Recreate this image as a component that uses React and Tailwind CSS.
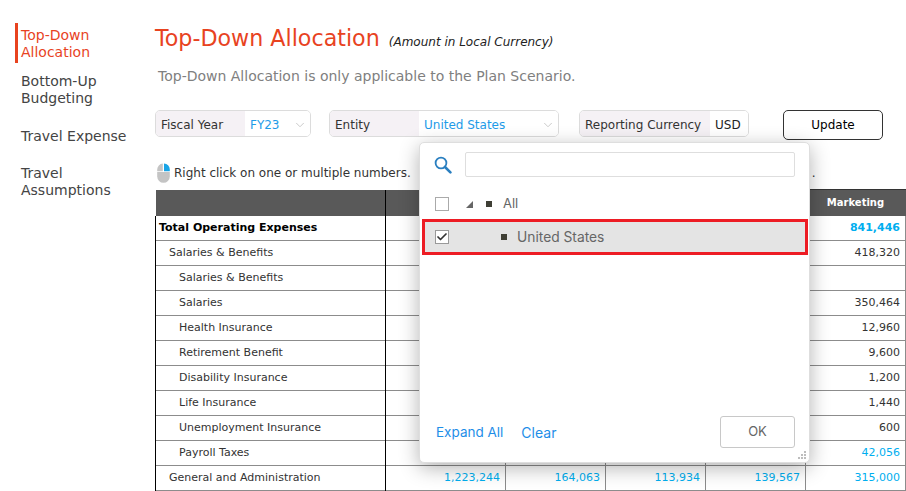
import { ChevronDown, Check } from "lucide-react";

const FONT = "font-['DejaVu_Sans',sans-serif]";
const POP = "font-['Inter',sans-serif]";

const rows = [
  { name: "Total Operating Expenses", total: true, marketing: "841,446", cls: "text-[#00aeef] font-bold" },
  { name: "Salaries & Benefits", lvl: 1, marketing: "418,320" },
  { name: "Salaries & Benefits", lvl: 2, marketing: "" },
  { name: "Salaries", lvl: 2, marketing: "350,464" },
  { name: "Health Insurance", lvl: 2, marketing: "12,960" },
  { name: "Retirement Benefit", lvl: 2, marketing: "9,600" },
  { name: "Disability Insurance", lvl: 2, marketing: "1,200" },
  { name: "Life Insurance", lvl: 2, marketing: "1,440" },
  { name: "Unemployment Insurance", lvl: 2, marketing: "600" },
  { name: "Payroll Taxes", lvl: 2, marketing: "42,056", cls: "text-[#00aeef]" },
  {
    name: "General and Administration",
    lvl: 1,
    vals: ["1,223,244", "164,063", "113,934", "139,567"],
    marketing: "315,000",
    cls: "text-[#00aeef]",
  },
];

function Selector({ label, value, labelW, width, chevron = true, dark }) {
  return (
    <div className={`flex h-[27px] items-stretch overflow-hidden rounded-[5px] border border-[#dcdcdc] text-[12px] ${width}`}>
      <div className={`flex items-center bg-[#f5f1f5] pl-[5px] pt-[2px] text-[#333] ${labelW}`}>{label}</div>
      <div className={`flex flex-1 items-center justify-between bg-white pl-[5px] pr-[3px] pt-[2px] ${dark ? "text-[#222]" : "text-[#1e9be8]"}`}>
        <span>{value}</span>
        {chevron && <ChevronDown size={14} strokeWidth={1.5} className="text-[#c4c4c4]" />}
      </div>
    </div>
  );
}

function MouseIcon() {
  return (
    <svg width="13" height="20" viewBox="0 0 13 20" className="ml-[2px]">
      <path d="M5.8 0.5 A6 6 0 0 0 0.2 6.5 V8.2 H5.8 Z" fill="#c4c4c4" />
      <path d="M7 0.5 A6 6 0 0 1 12.8 6.5 V8.2 H7 Z" fill="#18a4e6" />
      <path d="M0.2 9 H12.8 V13.5 A6.3 6.3 0 0 1 0.2 13.5 Z" fill="#c4c4c4" />
    </svg>
  );
}

function SearchIcon() {
  return (
    <svg width="18" height="18" viewBox="0 0 18 18" fill="none">
      <circle cx="7" cy="7" r="5.4" stroke="#2a7fc0" strokeWidth="1.8" />
      <path d="M11 11 L16.4 16.4" stroke="#2a7fc0" strokeWidth="2.6" strokeLinecap="round" />
    </svg>
  );
}

function Table() {
  return (
    <table className="w-[750px] table-fixed border-collapse text-[11px]">
      <colgroup>
        <col className="w-[230px]" />
        <col className="w-[120px]" />
        <col className="w-[100px]" />
        <col className="w-[100px]" />
        <col className="w-[100px]" />
        <col className="w-[100px]" />
      </colgroup>
      <thead>
        <tr className="h-[26px] bg-[#595959] text-white">
          <th className="border-r border-black" />
          <th />
          <th />
          <th />
          <th />
          <th className="border-t border-[#333] text-center text-[10px] font-bold">Marketing</th>
        </tr>
      </thead>
      <tbody>
        {rows.map((r, i) => (
          <tr key={i} className="h-[25px] border-b border-[#8c8c8c] text-[#333]">
            <td
              className={`border-l border-r border-black ${
                r.total ? "pl-[3px] font-bold text-black" : r.lvl === 1 ? "pl-[13px]" : "pl-[23px]"
              }`}
            >
              {r.name}
            </td>
            {[0, 1, 2, 3].map((c) => (
              <td key={c} className="border-r border-[#8c8c8c] pr-[5px] text-right text-[#00aeef]">
                {r.vals ? r.vals[c] : ""}
              </td>
            ))}
            <td className={`border-r border-[#8c8c8c] pr-[5px] text-right ${r.cls || ""}`}>{r.marketing}</td>
          </tr>
        ))}
      </tbody>
    </table>
  );
}

function Popup() {
  return (
    <div className={`absolute left-[419px] top-[142px] flex h-[321px] w-[391px] flex-col rounded-[5px] border border-[#dedede] bg-white shadow-[0_5px_20px_rgba(0,0,0,0.3)] ${POP}`}>
      <div className="flex items-center pl-[14px] pt-[9px]">
        <SearchIcon />
        <div className="ml-[13px] h-[25px] w-[330px] rounded-[2px] border border-[#dedede]" />
      </div>
      <div className="mt-[16px] flex h-[22px] items-center pl-[15px] text-[13px] text-[#666]">
        <span className="h-[14px] w-[14px] border border-[#aaa]" />
        <span className="ml-[17px] h-0 w-0 border-b-[7px] border-l-[7px] border-b-[#666] border-l-transparent" />
        <span className="ml-[13px] h-[6px] w-[6px] bg-[#3f3f35]" />
        <span className="ml-[11px]">All</span>
      </div>
      <div className="ml-[2px] mr-[1px] mt-[4px] flex h-[36px] shrink-0 items-center border-[3px] border-[#ed1c24] bg-[#e4e4e4] pl-[10px] text-[13.8px] text-[#666]">
        <span className="flex h-[14px] w-[14px] items-center justify-center border border-[#999] bg-white">
          <Check size={12} strokeWidth={3.5} className="text-[#333]" />
        </span>
        <span className="ml-[52px] h-[6px] w-[6px] bg-[#3f3f35]" />
        <span className="ml-[10px]">United States</span>
      </div>
      <div className="mt-auto flex items-center pb-[14px] pl-[16px] pr-[14px] text-[13.5px]">
        <span className="text-[#1e8ee8]">Expand All</span>
        <span className="ml-[18px] text-[14px] text-[#1e8ee8]">Clear</span>
        <div className="ml-auto flex h-[32px] w-[75px] items-center justify-center rounded-[3px] border border-[#c8c8c8] text-[13px] text-[#666]">
          OK
        </div>
      </div>
      <svg className="absolute bottom-[2px] right-[2px]" width="9" height="9" viewBox="0 0 9 9" fill="#bdbdbd">
        <rect x="6" y="0" width="2" height="2" />
        <rect x="3" y="3" width="2" height="2" />
        <rect x="6" y="3" width="2" height="2" />
        <rect x="0" y="6" width="2" height="2" />
        <rect x="3" y="6" width="2" height="2" />
        <rect x="6" y="6" width="2" height="2" />
      </svg>
    </div>
  );
}

export default function App() {
  return (
    <div className={`relative flex h-[491px] w-[906px] overflow-hidden bg-white ${FONT}`}>
      <nav className="w-[155px] shrink-0 pl-[15px] pt-[23px] text-[14px] leading-[17px] text-[#444]">
        <div className="border-l-[3px] border-[#e8431f] pb-[2px] pl-[3px] pt-[4px] text-[#e8431f]">
          Top-Down<br />Allocation
        </div>
        <div className="mt-[7px] py-[3px] pl-[6px]">
          Bottom-Up<br />Budgeting
        </div>
        <div className="mt-[18px] pl-[6px]">Travel Expense</div>
        <div className="mt-[20px] pl-[6px]">
          Travel<br />Assumptions
        </div>
      </nav>
      <main className="flex-1">
        <div className="mt-[24px] flex items-baseline">
          <h1 className="text-[22.2px] leading-[28px] font-normal text-[#e8431f]">Top-Down Allocation</h1>
          <span className="ml-[9px] text-[12px] italic text-[#222]">(Amount in Local Currency)</span>
        </div>
        <p className="ml-[3px] mt-[15px] text-[14px] leading-[18px] text-[#808080]">
          Top-Down Allocation is only applicable to the Plan Scenario.
        </p>
        <div className="mt-[25px] flex items-start">
          <Selector label="Fiscal Year" value="FY23" labelW="w-[89px]" width="w-[156px]" />
          <div className="ml-[18px]">
            <Selector label="Entity" value="United States" labelW="w-[89px]" width="w-[230px]" />
          </div>
          <div className="ml-[20px]">
            <Selector label="Reporting Currency" value="USD" labelW="w-[130px]" width="w-[170px]" chevron={false} dark />
          </div>
          <button className="ml-[34px] h-[30px] w-[100px] rounded-[5px] border border-[#333] text-[12px] text-black">
            Update
          </button>
        </div>
        <div className="mt-[21px] flex h-[24px] items-center text-[12px] text-[#333]">
          <MouseIcon />
          <span className="ml-[4px]">Right click on one or multiple numbers.</span>
          <span className="ml-[401px]">.</span>
        </div>
        <div className="mt-[4px]">
          <Table />
        </div>
      </main>
      <Popup />
    </div>
  );
}
